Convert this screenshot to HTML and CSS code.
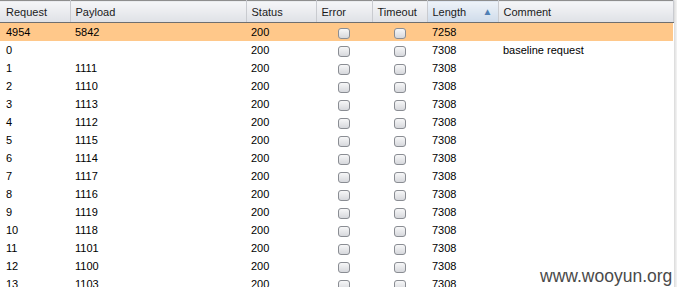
FILE: index.html
```html
<!DOCTYPE html>
<html lang="en">

<head>
    <meta charset="UTF-8">
    <title>Intruder results</title>
    <link rel="stylesheet" href="styles.css">
</head>

<body>
    <div class="frame">
        <table class="results">
            <colgroup>
                <col class="c-req">
                <col class="c-pay">
                <col class="c-status">
                <col class="c-err">
                <col class="c-time">
                <col class="c-len">
                <col class="c-comment">
            </colgroup>
            <thead>
                <tr>
                    <th>Request</th>
                    <th>Payload</th>
                    <th>Status</th>
                    <th>Error</th>
                    <th>Timeout</th>
                    <th class="sorted">Length <span class="arrow">&#9650;</span></th>
                    <th>Comment</th>
                </tr>
            </thead>
            <tbody id="rows"></tbody>
        </table>
        <div class="watermark">www.wooyun.org</div>
    </div>

    <script>
        const data = [
            ['4954', '5842', '7258', ''],
            ['0', '', '7308', 'baseline request'],
            ['1', '1111'], ['2', '1110'], ['3', '1113'], ['4', '1112'],
            ['5', '1115'], ['6', '1114'], ['7', '1117'], ['8', '1116'],
            ['9', '1119'], ['10', '1118'], ['11', '1101'], ['12', '1100'],
            ['13', '1103']
        ];

        const tbody = document.getElementById('rows');
        data.forEach((r, i) => {
            const tr = document.createElement('tr');
            if (i === 0) tr.className = 'selected';
            tr.innerHTML =
                '<td>' + r[0] + '</td>' +
                '<td>' + r[1] + '</td>' +
                '<td>200</td>' +
                '<td class="chk"><span class="box"></span></td>' +
                '<td class="chk"><span class="box"></span></td>' +
                '<td>' + (r[2] || '7308') + '</td>' +
                '<td>' + (r[3] || '') + '</td>';
            tbody.appendChild(tr);
        });
    </script>
</body>

</html>
```

FILE: styles.css
```css
* {
    box-sizing: border-box;
    margin: 0;
    padding: 0;
}

body {
    font-family: 'Liberation Sans', Arial, sans-serif;
    font-size: 11px;
    color: #000;
    background: #fff;
    overflow: hidden;
}

.frame {
    position: relative;
    width: 677px;
    height: 287px;
    background: #f2f2f2;
    overflow: hidden;
}

.results {
    width: 673px;
    table-layout: fixed;
    border-collapse: collapse;
    background: #fff;
    box-shadow: 1px 0 2px rgba(0, 0, 0, 0.12);
}

.c-req { width: 70px; }
.c-pay { width: 176px; }
.c-status { width: 70px; }
.c-err { width: 56px; }
.c-time { width: 55px; }
.c-len { width: 71px; }
.c-comment { width: 175px; }

th {
    height: 22px;
    padding: 0 5px;
    text-align: left;
    font-weight: normal;
    color: #1a1a1a;
    background: linear-gradient(#f5f6f8, #dfe1e6);
    border-top: 1px solid #8e8e8e;
    border-bottom: 1px solid #6f6f6f;
    border-right: 1px solid #c9cbd0;
    white-space: nowrap;
}

th:first-child {
    padding-left: 6px;
}

th.sorted {
    background: linear-gradient(#eef3f9, #cfdbea);
    position: relative;
}

.arrow {
    position: absolute;
    right: 5px;
    top: 5px;
    font-size: 10px;
    color: #4f7fb5;
}

td {
    height: 18px;
    padding: 0 5px;
    white-space: nowrap;
    overflow: hidden;
}

td:first-child {
    padding-left: 6px;
}

tr.selected td {
    background: #ffc88a;
}

td.chk {
    text-align: center;
    padding: 0;
}

.box {
    display: inline-block;
    width: 12px;
    height: 11px;
    margin-top: 3px;
    border: 1px solid #8a8d93;
    border-radius: 3px;
    background: linear-gradient(#f7f7f8, #d6d8dc);
    vertical-align: top;
}

.watermark {
    position: absolute;
    left: 540px;
    top: 266px;
    font-size: 17.5px;
    color: #4a4a4a;
    white-space: nowrap;
}
```
